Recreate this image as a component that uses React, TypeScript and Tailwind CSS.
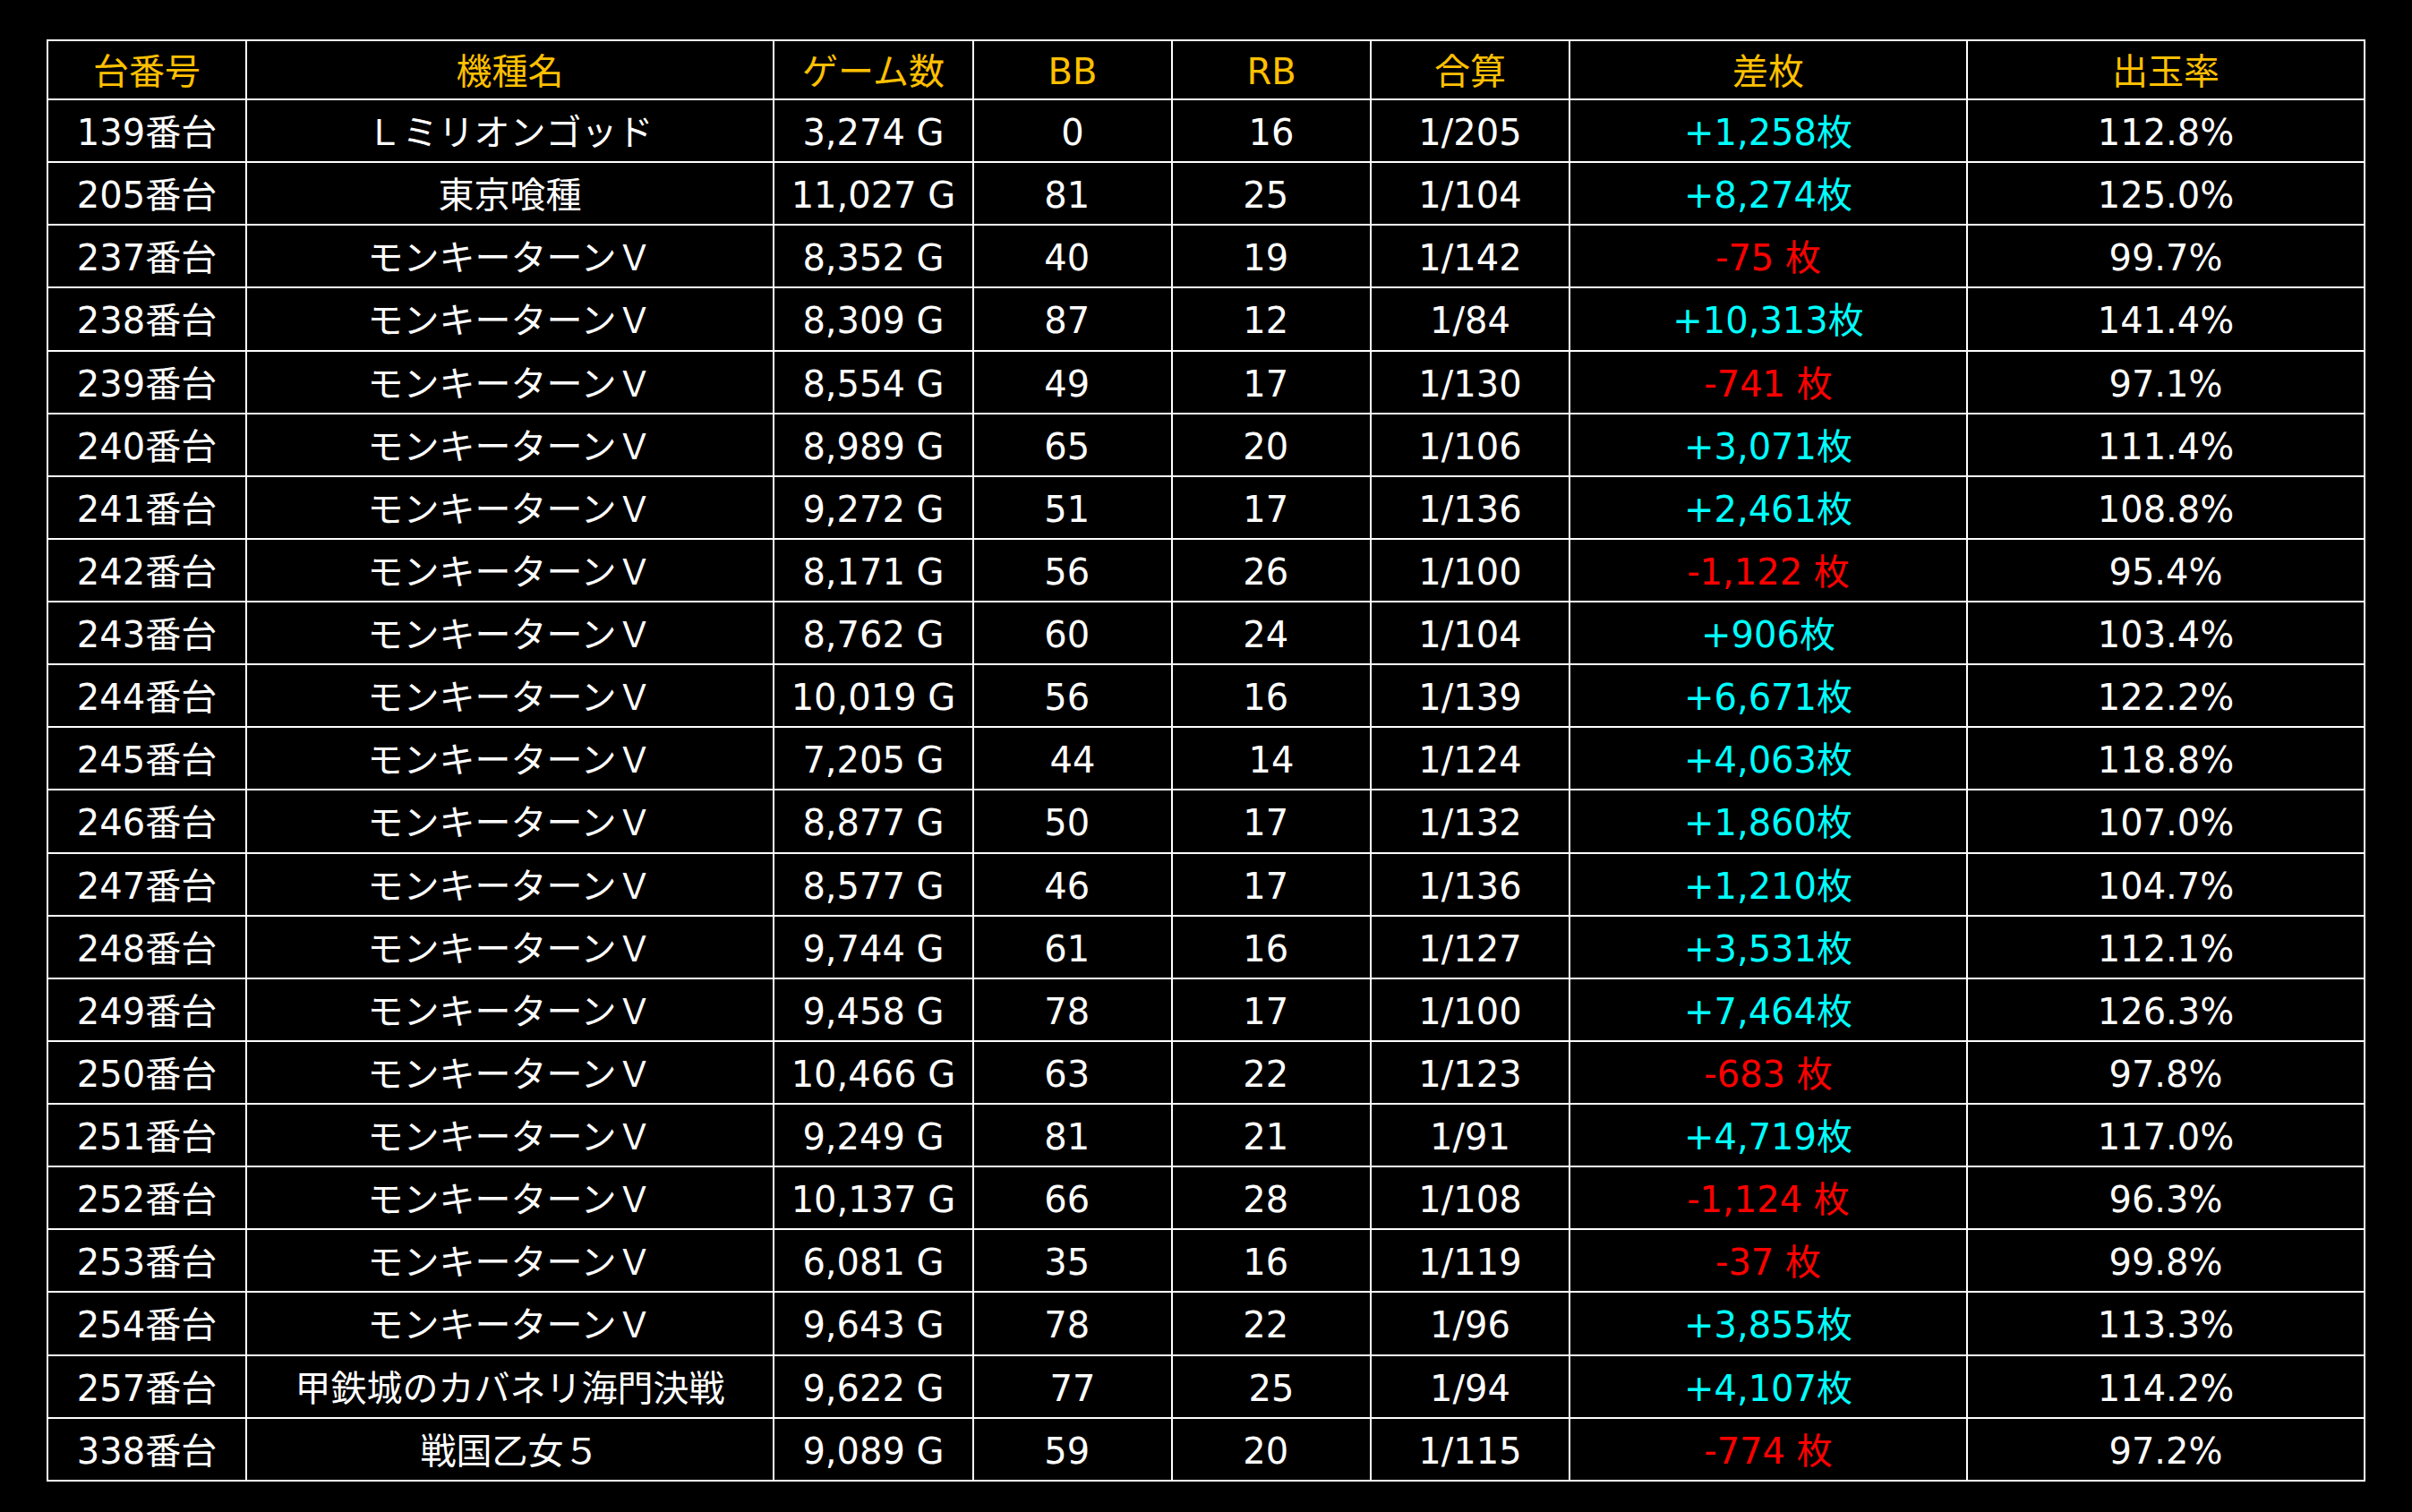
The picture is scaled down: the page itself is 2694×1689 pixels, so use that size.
type Row = {
  no: string;
  name: string;
  games: string;
  bb: string;
  rb: string;
  total: string;
  diff: string;
  rate: string;
};

// 末尾スペースはセンタリングのずれを再現するため残している
const rows: Row[] = [
  { no: "139番台", name: "Ｌミリオンゴッド", games: "3,274 G", bb: "0", rb: "16", total: "1/205", diff: "+1,258枚", rate: "112.8%" },
  { no: "205番台", name: "東京喰種", games: "11,027 G", bb: "81 ", rb: "25 ", total: "1/104", diff: "+8,274枚", rate: "125.0%" },
  { no: "237番台", name: "モンキーターンＶ", games: "8,352 G", bb: "40 ", rb: "19 ", total: "1/142", diff: "-75 枚", rate: "99.7%" },
  { no: "238番台", name: "モンキーターンＶ", games: "8,309 G", bb: "87 ", rb: "12 ", total: "1/84", diff: "+10,313枚", rate: "141.4%" },
  { no: "239番台", name: "モンキーターンＶ", games: "8,554 G", bb: "49 ", rb: "17 ", total: "1/130", diff: "-741 枚", rate: "97.1%" },
  { no: "240番台", name: "モンキーターンＶ", games: "8,989 G", bb: "65 ", rb: "20 ", total: "1/106", diff: "+3,071枚", rate: "111.4%" },
  { no: "241番台", name: "モンキーターンＶ", games: "9,272 G", bb: "51 ", rb: "17 ", total: "1/136", diff: "+2,461枚", rate: "108.8%" },
  { no: "242番台", name: "モンキーターンＶ", games: "8,171 G", bb: "56 ", rb: "26 ", total: "1/100", diff: "-1,122 枚", rate: "95.4%" },
  { no: "243番台", name: "モンキーターンＶ", games: "8,762 G", bb: "60 ", rb: "24 ", total: "1/104", diff: "+906枚", rate: "103.4%" },
  { no: "244番台", name: "モンキーターンＶ", games: "10,019 G", bb: "56 ", rb: "16 ", total: "1/139", diff: "+6,671枚", rate: "122.2%" },
  { no: "245番台", name: "モンキーターンＶ", games: "7,205 G", bb: "44", rb: "14", total: "1/124", diff: "+4,063枚", rate: "118.8%" },
  { no: "246番台", name: "モンキーターンＶ", games: "8,877 G", bb: "50 ", rb: "17 ", total: "1/132", diff: "+1,860枚", rate: "107.0%" },
  { no: "247番台", name: "モンキーターンＶ", games: "8,577 G", bb: "46 ", rb: "17 ", total: "1/136", diff: "+1,210枚", rate: "104.7%" },
  { no: "248番台", name: "モンキーターンＶ", games: "9,744 G", bb: "61 ", rb: "16 ", total: "1/127", diff: "+3,531枚", rate: "112.1%" },
  { no: "249番台", name: "モンキーターンＶ", games: "9,458 G", bb: "78 ", rb: "17 ", total: "1/100", diff: "+7,464枚", rate: "126.3%" },
  { no: "250番台", name: "モンキーターンＶ", games: "10,466 G", bb: "63 ", rb: "22 ", total: "1/123", diff: "-683 枚", rate: "97.8%" },
  { no: "251番台", name: "モンキーターンＶ", games: "9,249 G", bb: "81 ", rb: "21 ", total: "1/91", diff: "+4,719枚", rate: "117.0%" },
  { no: "252番台", name: "モンキーターンＶ", games: "10,137 G", bb: "66 ", rb: "28 ", total: "1/108", diff: "-1,124 枚", rate: "96.3%" },
  { no: "253番台", name: "モンキーターンＶ", games: "6,081 G", bb: "35 ", rb: "16 ", total: "1/119", diff: "-37 枚", rate: "99.8%" },
  { no: "254番台", name: "モンキーターンＶ", games: "9,643 G", bb: "78 ", rb: "22 ", total: "1/96", diff: "+3,855枚", rate: "113.3%" },
  { no: "257番台", name: "甲鉄城のカバネリ海門決戦", games: "9,622 G", bb: "77", rb: "25", total: "1/94", diff: "+4,107枚", rate: "114.2%" },
  { no: "338番台", name: "戦国乙女５", games: "9,089 G", bb: "59 ", rb: "20 ", total: "1/115", diff: "-774 枚", rate: "97.2%" },
];

const headers = ["台番号", "機種名", "ゲーム数", "BB", "RB", "合算", "差枚", "出玉率"];

const cell = "border-2 border-white text-center align-middle whitespace-pre px-0 pb-0 pt-[4px]";

export default function App() {
  return (
    <div className="min-h-screen w-full bg-black pt-[44px] pl-[52px] font-['DejaVu_Sans','Noto_Sans_CJK_JP',sans-serif] text-[40px] leading-none text-white">
      <table className="w-[2590px] table-fixed border-collapse">
        <colgroup>
          <col className="w-[222px]" />
          <col className="w-[589px]" />
          <col className="w-[223px]" />
          <col className="w-[222px]" />
          <col className="w-[222px]" />
          <col className="w-[222px]" />
          <col className="w-[444px]" />
          <col className="w-[444px]" />
        </colgroup>
        <thead>
          <tr className="h-[66px]">
            {headers.map((h) => (
              <th key={h} className={`${cell} font-normal text-[#ffc000]`}>
                {h}
              </th>
            ))}
          </tr>
        </thead>
        <tbody>
          {rows.map((r) => {
            const negative = r.diff.startsWith("-");
            return (
              <tr key={r.no} className="h-[70.14px]">
                <td className={cell}>{r.no}</td>
                <td className={cell}>{r.name}</td>
                <td className={cell}>{r.games}</td>
                <td className={cell}>{r.bb}</td>
                <td className={cell}>{r.rb}</td>
                <td className={cell}>{r.total}</td>
                <td className={`${cell} ${negative ? "text-[#ff0000]" : "text-[#00ffff]"}`}>
                  {r.diff}
                </td>
                <td className={cell}>{r.rate}</td>
              </tr>
            );
          })}
        </tbody>
      </table>
    </div>
  );
}
